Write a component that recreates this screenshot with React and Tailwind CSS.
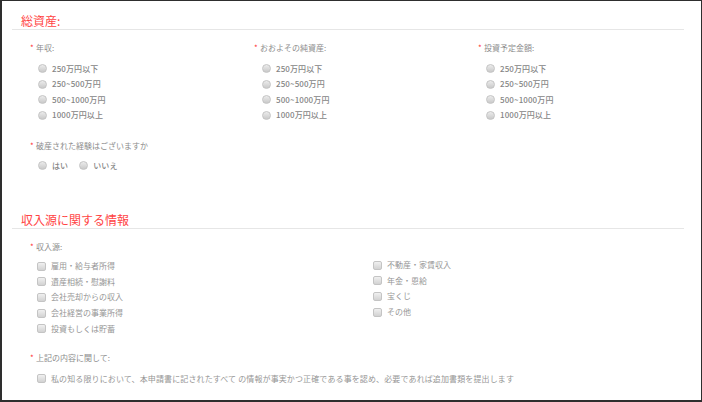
import React from "react";

const font = { fontFamily: '"Noto Sans CJK JP", "Noto Sans", sans-serif' };

function Label({ children }) {
  return (
    <div className="flex items-center h-[12px] leading-[12px] text-[8px] text-[#8c8c8c]">
      <span className="text-[#f33] w-[5px]">*</span>
      <span className="ml-[1px]">{children}</span>
    </div>
  );
}

function Radio({ label }) {
  return (
    <div className="flex items-center h-[15.5px]">
      <span className="w-[9px] h-[9px] rounded-full border border-[#c4c4c4] bg-gradient-to-b from-[#ececec] to-[#c9c9c9] shrink-0" />
      <span className="ml-[5px] text-[8px] leading-[12px] font-medium tracking-[0.1px] text-[#858585]">{label}</span>
    </div>
  );
}

function Check({ label, wide }) {
  return (
    <div className="flex items-center h-[15.6px]">
      <span className="w-[9px] h-[9px] rounded-[2px] border border-[#c4c4c4] bg-gradient-to-b from-[#f0f0f0] to-[#d2d2d2] shrink-0" />
      <span className={"ml-[5px] text-[8px] leading-[12px] text-[#969696] " + (wide ? "tracking-[0.12px]" : "")}>{label}</span>
    </div>
  );
}

const amounts = ["250万円以下", "250~500万円", "500~1000万円", "1000万円以上"];

function RadioCol({ title }) {
  return (
    <div className="pl-[18px]">
      <Label>{title}</Label>
      <div className="mt-[7px] ml-[8px]">
        {amounts.map((a) => (
          <Radio key={a} label={a} />
        ))}
      </div>
    </div>
  );
}

function SectionTitle({ children, className }) {
  return (
    <div className={"pl-[9px] border-b border-[#e6e6e6] text-[12px] leading-[16px] text-[#f44] " + className}>
      {children}
    </div>
  );
}

export default function App() {
  return (
    <div
      style={font}
      className="w-[702px] h-[402px] bg-white border-l-2 border-t border-r border-b-2 border-[#2e2e2e] overflow-hidden pl-[10px] pr-[17px]"
    >
      <SectionTitle className="pt-[12px]">総資産:</SectionTitle>
      <div className="grid grid-cols-3 mt-[12px]">
        <RadioCol title="年収:" />
        <RadioCol title="おおよその純資産:" />
        <RadioCol title="投資予定金額:" />
      </div>
      <div className="pl-[18px] mt-[17px]">
        <Label>破産された経験はございますか</Label>
        <div className="mt-[6px] ml-[8px] flex items-center gap-[11px]">
          <Radio label="はい" />
          <Radio label="いいえ" />
        </div>
      </div>

      <SectionTitle className="mt-[38px]">収入源に関する情報</SectionTitle>
      <div className="pl-[18px] mt-[12px]">
        <Label>収入源:</Label>
      </div>
      <div className="grid grid-cols-2">
        <div className="pl-[18px] mt-[6px] ml-[7px]">
          <Check label="雇用・給与者所得" />
          <Check label="遺産相続・慰謝料" />
          <Check label="会社売却からの収入" />
          <Check label="会社経営の事業所得" />
          <Check label="投資もしくは貯蓄" />
        </div>
        <div className="pl-[18px] mt-[5px] ml-[7px]">
          <Check label="不動産・家賃収入" />
          <Check label="年金・恩給" />
          <Check label="宝くじ" />
          <Check label="その他" />
        </div>
      </div>
      <div className="pl-[18px] mt-[16px]">
        <Label>上記の内容に関して:</Label>
        <div className="mt-[6.5px] ml-[7px]">
          <Check wide label="私の知る限りにおいて、本申請書に記されたすべて の情報が事実かつ正確である事を認め、必要であれば追加書類を提出します" />
        </div>
      </div>
    </div>
  );
}
